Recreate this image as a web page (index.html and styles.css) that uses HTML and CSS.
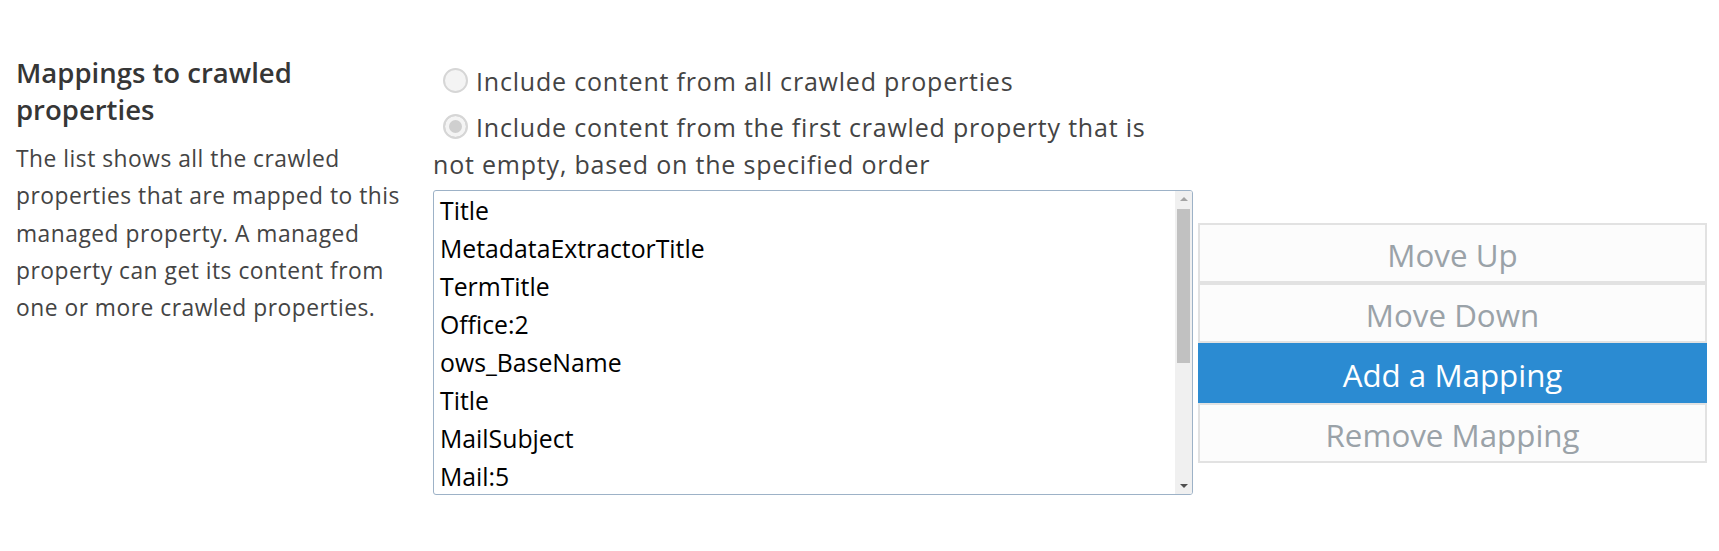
FILE: index.html
```html
<!DOCTYPE html>
<html lang="en">
<head>
<meta charset="utf-8">
<title>Mappings to crawled properties</title>
<link rel="stylesheet" href="styles.css">
</head>
<body>
<div class="section">
  <div class="info">
    <h3 class="title">Mappings to crawled properties</h3>
    <p class="desc">The list shows all the crawled properties that are mapped to this managed property. A managed property can get its content from one or more crawled properties.</p>
  </div>
  <div class="control">
    <label class="radio"><span class="dot"></span>Include content from all crawled properties</label>
    <label class="radio second"><span class="dot checked"></span>Include content from the first crawled property that is not empty, based on the specified order</label>
    <div class="mapping">
      <div class="listbox">
        <div class="items">
          <div class="item">Title</div>
          <div class="item">MetadataExtractorTitle</div>
          <div class="item">TermTitle</div>
          <div class="item">Office:2</div>
          <div class="item">ows_BaseName</div>
          <div class="item">Title</div>
          <div class="item">MailSubject</div>
          <div class="item">Mail:5</div>
        </div>
        <div class="scrollbar">
          <span class="arrow up"></span>
          <span class="thumb"></span>
          <span class="rest"></span>
          <span class="arrow down"></span>
        </div>
      </div>
      <div class="buttons">
        <button class="btn">Move Up</button>
        <button class="btn">Move Down</button>
        <button class="btn primary">Add a Mapping</button>
        <button class="btn">Remove Mapping</button>
      </div>
    </div>
  </div>
</div>
</body>
</html>
```
FILE: styles.css
```css
html, body {
  margin: 0;
  padding: 0;
  background: #ffffff;
}
body {
  font-family: "Open Sans", "Noto Sans", sans-serif;
  color: #444444;
}
.section {
  display: flex;
  align-items: flex-start;
  padding-top: 54px;
}
.info {
  width: 395px;
  padding-left: 16px;
  flex: none;
}
.title {
  margin: 0;
  font-size: 27.5px;
  line-height: 37px;
  font-weight: 600;
  color: #363636;
}
.desc {
  margin: 12px 0 0;
  font-size: 22.8px;
  line-height: 37.25px;
  letter-spacing: 0.5px;
  color: #444444;
}
.control {
  margin-left: 22px;
  padding-top: 9px;
  display: flex;
  flex-direction: column;
}
.radio {
  display: block;
  width: 760px;
  font-size: 25px;
  line-height: 37px;
  letter-spacing: 0.8px;
  color: #444444;
}
.radio.second {
  margin-top: 9px;
}
.dot {
  display: inline-block;
  box-sizing: border-box;
  width: 25px;
  height: 25px;
  margin: 0 8px 0 10px;
  border: 2px solid #d6d6d6;
  border-radius: 50%;
  background: #f4f4f4;
  vertical-align: -2px;
}
.dot.checked {
  background: #cfcfcf;
  box-shadow: inset 0 0 0 4px #f4f4f4;
}
.mapping {
  display: flex;
  align-items: center;
  margin-top: 7px;
}
.listbox {
  box-sizing: border-box;
  width: 760px;
  height: 305px;
  border: 1.5px solid #9db2c7;
  border-radius: 3px;
  display: flex;
  overflow: hidden;
  background: #ffffff;
}
.items {
  flex: 1;
  padding-left: 6px;
  font-size: 24.8px;
  line-height: 38px;
  color: #000000;
}
.scrollbar {
  width: 17px;
  flex: none;
  background: #f0f0f0;
  display: flex;
  flex-direction: column;
  align-items: center;
}
.arrow {
  width: 0;
  height: 0;
  border-left: 4px solid transparent;
  border-right: 4px solid transparent;
  margin: 6px 0;
}
.arrow.up {
  border-bottom: 4px solid #a3a3a3;
}
.arrow.down {
  border-top: 4px solid #505050;
}
.thumb {
  width: 13px;
  height: 154px;
  background: #c1c1c1;
  margin-top: 2px;
}
.rest {
  flex: 1;
}
.buttons {
  margin-left: 5px;
  width: 509px;
  display: flex;
  flex-direction: column;
}
.btn {
  box-sizing: border-box;
  height: 60px;
  margin: 0;
  padding: 5px 0 0;
  border: 2px solid #e2e2e2;
  background: #fcfcfc;
  color: #9aa2a8;
  font-family: "Open Sans", "Noto Sans", sans-serif;
  font-size: 31.3px;
  text-align: center;
}
.btn.primary {
  background: #2b8bd2;
  border-color: #2b8bd2;
  color: #ffffff;
}
```
